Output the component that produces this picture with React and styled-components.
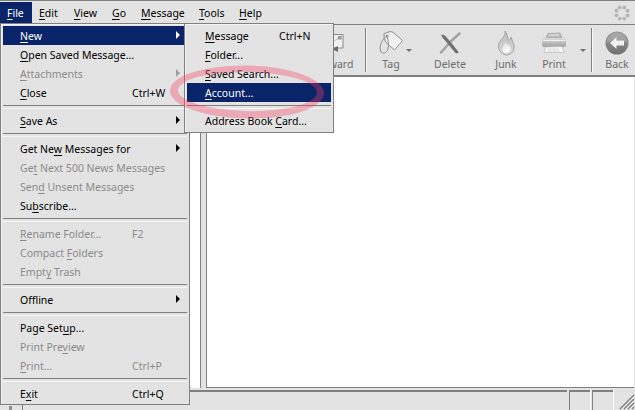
import React from "react";
import styled, { createGlobalStyle } from "styled-components";

const Global = createGlobalStyle`
  html, body { margin: 0; padding: 0; background: #e3e3e3; overflow: hidden; }
  * { box-sizing: border-box; }
`;

const Window = styled.div`
  position: relative;
  width: 635px;
  height: 410px;
  overflow: hidden;
  display: flex;
  flex-direction: column;
  background: #e3e3e3;
  border-top: 1px solid #808080;
  font-family: "Noto Sans", sans-serif;
  font-size: 10.5px;
  color: #000;
`;

const MenuBar = styled.div`
  height: 23px;
  padding-top: 1px;
  display: flex;
  align-items: stretch;
  flex: none;
`;

const BarItem = styled.div`
  width: ${(p) => p.$w}px;
  padding-left: 7px;
  height: 21px;
  line-height: 22px;
  white-space: nowrap;
  background: ${(p) => (p.$active ? "#0a246a" : "transparent")};
  color: ${(p) => (p.$active ? "#fff" : "#000")};
`;

const Throbber = styled.svg`
  margin-left: auto;
  margin-right: 4px;
  width: 18px;
  height: 18px;
  margin-top: 2px;
`;

const Toolbar = styled.div`
  flex: none;
  height: 53px;
  border-top: 1px solid #808080;
  border-bottom: 2px solid #808080;
  display: flex;
  justify-content: flex-end;
  align-items: stretch;
`;

const ToolSep = styled.div`
  width: 1px;
  margin: 3px ${(p) => p.$mr || 0}px 3px ${(p) => p.$ml || 0}px;
  background: #808080;
  box-shadow: 1px 0 0 #f6f6f6;
`;

const ToolButton = styled.div`
  position: relative;
  width: ${(p) => p.$w}px;
  padding-right: ${(p) => p.$pr || 0}px;
  padding-top: 4px;
  display: flex;
  flex-direction: column;
  align-items: center;
  color: #6c6c6c;
`;

const IconSlot = styled.div`
  height: 28px;
  display: flex;
  align-items: center;
  justify-content: center;
`;

const ToolLabel = styled.div`
  height: 15px;
  line-height: 15px;
  white-space: nowrap;
`;

const Caret = styled.div`
  position: absolute;
  right: ${(p) => p.$r}px;
  top: 24px;
  width: 0;
  height: 0;
  border-left: 3px solid transparent;
  border-right: 3px solid transparent;
  border-top: 3px solid #707070;
`;

const Main = styled.div`
  flex: 1;
  min-height: 0;
  display: flex;
  align-items: stretch;
`;

const FolderPane = styled.div`
  width: 190px;
  border-right: 1px solid #808080;
`;

const ThreadPane = styled.div`
  width: 11px;
  background: #fff;
  border-right: 1px solid #808080;
`;

const Splitter = styled.div`
  width: 5px;
`;

const ContentPane = styled.div`
  flex: 1;
  background: #fff;
  border-left: 1px solid #808080;
  border-bottom: 1px solid #808080;
  margin-right: 1px;
`;

const StatusBar = styled.div`
  flex: none;
  height: 22px;
  padding-top: 2px;
  display: flex;
  align-items: stretch;
`;

const OfflineCell = styled.div`
  width: 23px;
  border-right: 1px solid #808080;
  padding: 16px 0 0 9px;
`;

const OfflineDot = styled.div`
  width: 3px;
  height: 4px;
  background: #909090;
`;

const StatusMain = styled.div`
  flex: 1;
  border-top: 2px solid #808080;
  margin-right: 2px;
`;

const StatusCell = styled.div`
  width: ${(p) => p.$w}px;
  margin-right: 2px;
  border-top: 2px solid #808080;
  border-left: 1px solid #808080;
  box-shadow: 1px 0 0 #fff;
`;

const Grip = styled.svg`
  width: 19px;
  height: 19px;
  margin-left: 1px;
  align-self: flex-end;
`;

const Menu = styled.div`
  position: absolute;
  top: 22px;
  left: ${(p) => p.$x}px;
  width: ${(p) => p.$w}px;
  background: #e3e3e3;
  border: 1px solid #808080;
  box-shadow: inset 1px 1px 0 #f4f4f4;
  padding: 2px ${(p) => p.$pad}px ${(p) => p.$pb}px;
  z-index: ${(p) => p.$z};
`;

const Row = styled.div`
  position: relative;
  height: 19px;
  line-height: 21px;
  padding-left: ${(p) => p.$indent}px;
  white-space: nowrap;
  background: ${(p) => (p.$active ? "#0a246a" : "transparent")};
  color: ${(p) => (p.$active ? "#fff" : p.$off ? "#8b8b8b" : "#000")};
`;

const Shortcut = styled.span`
  position: absolute;
  left: ${(p) => p.$x}px;
  top: 0;
`;

const Arrow = styled.span`
  position: absolute;
  right: ${(p) => p.$r}px;
  top: 5px;
  width: 0;
  height: 0;
  border-top: 4px solid transparent;
  border-bottom: 4px solid transparent;
  border-left: 4px solid ${(p) => (p.$off ? "#a0a0a0" : p.$active ? "#fff" : "#000")};
`;

const MenuSep = styled.div`
  height: 9px;
  display: flex;
  align-items: center;
  &::before {
    content: "";
    flex: 1;
    height: 2px;
    border-top: 1px solid #808080;
    border-bottom: 1px solid #f6f6f6;
  }
`;

const Mnemonic = styled.span`
  text-decoration: underline;
  text-underline-offset: 2px;
  text-decoration-thickness: 1px;
`;

const Circle = styled.svg`
  position: absolute;
  left: 160px;
  top: 55px;
  width: 175px;
  height: 70px;
  z-index: 5;
  pointer-events: none;
`;

const Label = ({ text }) => {
  const i = text.indexOf("&");
  if (i < 0) return text;
  return (
    <>
      {text.slice(0, i)}
      <Mnemonic>{text[i + 1]}</Mnemonic>
      {text.slice(i + 2)}
    </>
  );
};

const SEP = { sep: true };
const fileMenu = [
  { t: "&New", arrow: true, active: true },
  { t: "&Open Saved Message..." },
  { t: "&Attachments", off: true, arrow: true },
  { t: "&Close", s: "Ctrl+W" },
  SEP,
  { t: "&Save As", arrow: true },
  SEP,
  { t: "Get Ne&w Messages for", arrow: true },
  { t: "Ge&t Next 500 News Messages", off: true },
  { t: "Sen&d Unsent Messages", off: true },
  { t: "Su&bscribe..." },
  SEP,
  { t: "&Rename Folder...", s: "F2", off: true },
  { t: "Compact &Folders", off: true },
  { t: "Empt&y Trash", off: true },
  SEP,
  { t: "Off&line", arrow: true },
  SEP,
  { t: "Page Set&up..." },
  { t: "Print Pre&view", off: true },
  { t: "&Print...", s: "Ctrl+P", off: true },
  SEP,
  { t: "E&xit", s: "Ctrl+Q" },
];
const newMenu = [
  { t: "&Message", s: "Ctrl+N" },
  { t: "&Folder..." },
  { t: "&Saved Search..." },
  { t: "&Account...", active: true },
  SEP,
  { t: "Address Book &Card..." },
];

const bar = [
  ["&File", 32],
  ["&Edit", 35],
  ["&View", 38],
  ["&Go", 29],
  ["&Message", 58],
  ["&Tools", 40],
  ["&Help", 40],
];

const MenuRows = ({ items, indent, sx, ar }) =>
  items.map((it, i) =>
    it.sep ? (
      <MenuSep key={i} />
    ) : (
      <Row key={i} $active={it.active} $off={it.off} $indent={indent}>
        <Label text={it.t} />
        {it.s && <Shortcut $x={sx}>{it.s}</Shortcut>}
        {it.arrow && <Arrow $r={ar} $off={it.off} $active={it.active} />}
      </Row>
    )
  );

const ForwardIcon = () => (
  <svg width="24" height="24" viewBox="0 0 24 24">
    <path d="M4 3.500H22V17H4Z" fill="#f0f0f0" stroke="#8a8a8a" />
    <path d="M4 4l9 6 9-6" fill="none" stroke="#bcbcbc" />
    <rect x="17" y="5" width="3.500" height="3.500" fill="#9a9a9a" />
    <path d="M6 18l6 -3v6z" fill="#6e6e6e" transform="translate(5 0)" />
  </svg>
);

const TagIcon = () => (
  <svg width="26" height="26" viewBox="0 0 26 26">
    <defs>
      <linearGradient id="tg" x1="0" y1="0" x2="1" y2="1">
        <stop offset="0" stopColor="#e9e9e9" />
        <stop offset="1" stopColor="#fafafa" />
      </linearGradient>
    </defs>
    <path d="M6 3.500L12 1.500Q14 1.500 16 3L24.500 10.500L16.500 20L7.500 12Q5.500 8 6 3.500Z" fill="url(#tg)" stroke="#8f8f8f" />
    <circle cx="9" cy="6" r="1.500" fill="#999" />
    <path d="M9 6C4 9 1 16 2.500 21C4 25 9 23 10 19C11 14 10 10 9 6" fill="none" stroke="#8f8f8f" />
  </svg>
);

const DeleteIcon = () => (
  <svg width="24" height="24" viewBox="0 0 24 24">
    <path d="M21.500 2.500C16 7 9 14 3 21.500" fill="none" stroke="#a2a2a2" strokeWidth="2.400" strokeLinecap="round" />
    <path d="M3 3.500C7 3.500 9 7 13 11.500C16 15 18 18 21 21.500L18 22.500C14 18 11 14 8 10.500C6 8.500 4 6.500 3 3.500Z" fill="#6f6f6f" />
  </svg>
);

const JunkIcon = () => (
  <svg width="22" height="26" viewBox="0 0 22 26">
    <defs>
      <linearGradient id="jg" x1="0" y1="0" x2="0" y2="1">
        <stop offset="0" stopColor="#bdbdbd" />
        <stop offset="1" stopColor="#d8d8d8" />
      </linearGradient>
      <linearGradient id="ji" x1="0" y1="0" x2="0" y2="1">
        <stop offset="0" stopColor="#dcdcdc" />
        <stop offset="1" stopColor="#ffffff" />
      </linearGradient>
    </defs>
    <path d="M10 1C11 6 6 9 4 13C2 18 5 24 11 25C17 25 20 20 19 15C18.500 12 16.500 10 16 7C15 10 14 11 13 10C13 7 12 3 10 1Z" fill="url(#jg)" stroke="#999" strokeWidth="0.800" />
    <path d="M10.500 11C11 14 7 16 7.500 20C8 23 14 24 15.500 20C16.500 17 14 15.500 13.500 13.500C13 15 12 15 11.500 14C11.500 13 11 12 10.500 11Z" fill="url(#ji)" />
  </svg>
);

const PrintIcon = () => (
  <svg width="26" height="22" viewBox="0 0 26 22">
    <defs>
      <linearGradient id="pg" x1="0" y1="0" x2="0" y2="1">
        <stop offset="0" stopColor="#dcdcdc" />
        <stop offset="1" stopColor="#a0a0a0" />
      </linearGradient>
    </defs>
    <path d="M7 1.500L19 1L21 6H5Z" fill="#bcbcbc" stroke="#a0a0a0" strokeWidth="0.700" />
    <path d="M8 3h10" stroke="#ececec" />
    <path d="M1 8Q1 6 4 6H22Q25 6 25 8V13Q25 15 22 15H4Q1 15 1 13Z" fill="url(#pg)" />
    <path d="M2 8.500H24" stroke="#f2f2f2" />
    <path d="M5 15L21 14.500L23 20.500H3Z" fill="#f8f8f8" stroke="#bcbcbc" strokeWidth="0.700" />
    <path d="M7 17h11M6 19h13" stroke="#d6d6d6" />
  </svg>
);

const BackIcon = () => (
  <svg width="24" height="24" viewBox="0 0 24 24">
    <defs>
      <linearGradient id="bg" x1="0" y1="0" x2="0" y2="1">
        <stop offset="0" stopColor="#9d9d9d" />
        <stop offset="1" stopColor="#6f6f6f" />
      </linearGradient>
    </defs>
    <circle cx="12" cy="12" r="11.500" fill="url(#bg)" />
    <path d="M1.500 12A10.500 10 0 0 1 22.500 12C16 8 8 8 1.500 12Z" fill="#fff" opacity="0.180" />
    <path d="M5 12L11.500 6V9.500H19V14.500H11.500V18Z" fill="#f2f2f2" />
  </svg>
);

const dots = Array.from({ length: 8 }, (_, i) => {
  const a = (i * Math.PI) / 4 + Math.PI / 8;
  return [9 + 6 * Math.cos(a), 9 + 6 * Math.sin(a), 1.9];
});

export default function App() {
  return (
    <Window>
      <Global />
      <MenuBar>
        {bar.map(([t, w], i) => (
          <BarItem key={t} $w={w} $active={i === 0}>
            <Label text={t} />
          </BarItem>
        ))}
        <Throbber viewBox="0 0 18 18">
          {dots.map(([x, y, r], i) => (
            <circle key={i} cx={x} cy={y} r={r} fill="#b4b4b4" />
          ))}
        </Throbber>
      </MenuBar>
      <Toolbar>
        <ToolButton $w={62}>
          <IconSlot><ForwardIcon /></IconSlot>
          <ToolLabel>Forward</ToolLabel>
        </ToolButton>
        <ToolSep $ml={1} />
        <ToolButton $w={50}>
          <IconSlot><TagIcon /></IconSlot>
          <ToolLabel>Tag</ToolLabel>
          <Caret $r={4} />
        </ToolButton>
        <ToolButton $w={68}>
          <IconSlot><DeleteIcon /></IconSlot>
          <ToolLabel>Delete</ToolLabel>
        </ToolButton>
        <ToolButton $w={44}>
          <IconSlot><JunkIcon /></IconSlot>
          <ToolLabel>Junk</ToolLabel>
        </ToolButton>
        <ToolButton $w={63} $pr={11}>
          <IconSlot><PrintIcon /></IconSlot>
          <ToolLabel>Print</ToolLabel>
          <Caret $r={5} />
        </ToolButton>
        <ToolSep $mr={7} />
        <ToolButton $w={36}>
          <IconSlot><BackIcon /></IconSlot>
          <ToolLabel>Back</ToolLabel>
        </ToolButton>
      </Toolbar>
      <Main>
        <FolderPane />
        <ThreadPane />
        <Splitter />
        <ContentPane />
      </Main>
      <StatusBar>
        <OfflineCell><OfflineDot /></OfflineCell>
        <StatusMain />
        <StatusCell $w={21} />
        <StatusCell $w={21} />
        <Grip viewBox="0 0 19 19">
          <path d="M18 4L4 18M18 8L8 18M18 12L12 18M18 16L16 18" stroke="#808080" strokeWidth="1.500" fill="none" />
          <path d="M18 6L6 18M18 10L10 18M18 14L14 18" stroke="#fff" strokeWidth="1" fill="none" />
        </Grip>
      </StatusBar>

      <Menu $x={0} $w={190} $pad={2} $pb={1} $z={2}>
        <MenuRows items={fileMenu} indent={17} sx={129} ar={7} />
      </Menu>
      <Menu $x={184} $w={150} $pad={2} $pb={2} $z={3}>
        <MenuRows items={newMenu} indent={18} sx={92} ar={7} />
      </Menu>
      <Circle viewBox="160 55 175 70">
        <path
          fillRule="evenodd"
          fill="rgba(247,59,94,0.35)"
          d="M170 91a77 26.500 0 1 0 154 0a77 26.500 0 1 0 -154 0ZM178 90.500a69.500 19.500 0 1 0 139 0a69.500 19.500 0 1 0 -139 0Z"
          transform="rotate(1 247 91)"
        />
      </Circle>
    </Window>
  );
}
